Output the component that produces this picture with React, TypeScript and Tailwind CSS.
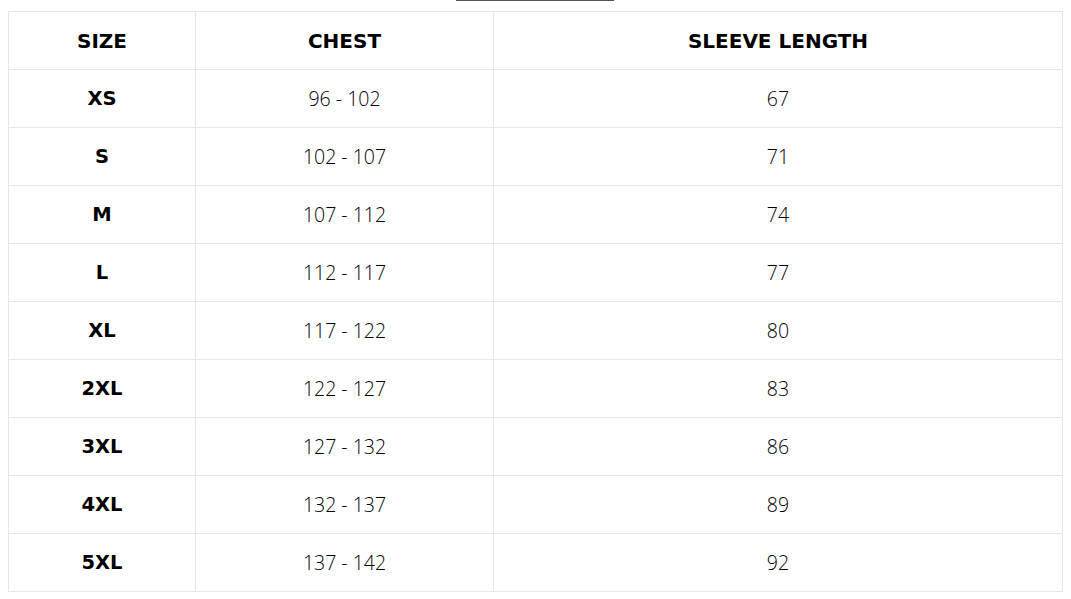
import React from "react";

const rows: [string, string, string][] = [
  ["XS", "96 - 102", "67"],
  ["S", "102 - 107", "71"],
  ["M", "107 - 112", "74"],
  ["L", "112 - 117", "77"],
  ["XL", "117 - 122", "80"],
  ["2XL", "122 - 127", "83"],
  ["3XL", "127 - 132", "86"],
  ["4XL", "132 - 137", "89"],
  ["5XL", "137 - 142", "92"],
];

export default function App() {
  return (
    <div className="w-[1071px] h-[599px] bg-white overflow-hidden relative">
      <div className="absolute left-[456px] top-0 w-[158px] h-[1px] bg-[#5a5358]" />
      <div className="pt-[11px] pl-[8px]">
        <table className="border-collapse text-black" style={{ fontFamily: "'DejaVu Sans', sans-serif" }}>
          <thead>
            <tr className="h-[58px]">
              <th className="w-[187px] border border-[#e6e6e6] text-[20px] font-bold p-0">SIZE</th>
              <th className="w-[298px] border border-[#e6e6e6] text-[20px] font-bold p-0">CHEST</th>
              <th className="w-[569px] border border-[#e6e6e6] text-[20px] font-bold p-0">SLEEVE LENGTH</th>
            </tr>
          </thead>
          <tbody>
            {rows.map(([s, c, l]) => (
              <tr key={s} className="h-[58px]">
                <td className="border border-[#e6e6e6] text-center text-[19.5px] font-bold p-0">{s}</td>
                <td className="border border-[#e6e6e6] text-center text-[19.5px] font-light p-0 text-black" style={{ fontFamily: "'Open Sans', sans-serif" }}>{c}</td>
                <td className="border border-[#e6e6e6] text-center text-[19.5px] font-light p-0 text-black" style={{ fontFamily: "'Open Sans', sans-serif" }}>{l}</td>
              </tr>
            ))}
          </tbody>
        </table>
      </div>
    </div>
  );
}
